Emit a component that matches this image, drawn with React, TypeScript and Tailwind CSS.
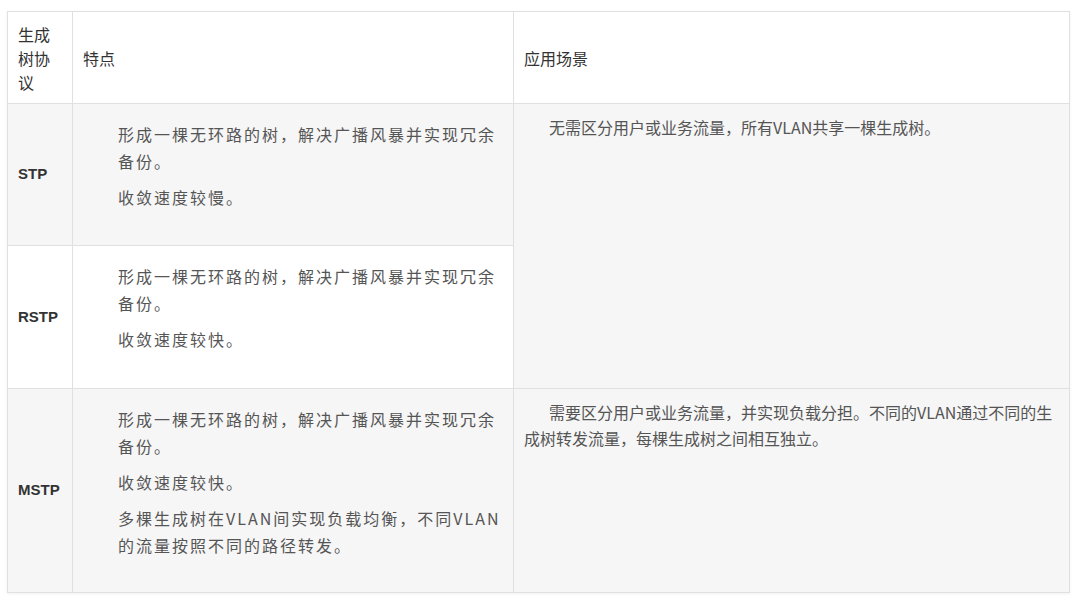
import React from 'react';

export default function App() {
    const redundancy = ["形成一棵无环路的树，解决广播风暴并实现冗余", "备份。"];

    const rows = [
        {
            name: "STP",
            bg: "bg-[#f6f6f6]",
            h: "h-[142px]",
            points: [redundancy, ["收敛速度较慢。"]],
        },
        {
            name: "RSTP",
            bg: "bg-white",
            h: "h-[143px]",
            points: [redundancy, ["收敛速度较快。"]],
        },
        {
            name: "MSTP",
            bg: "bg-[#f6f6f6]",
            h: "h-[204px]",
            points: [
                redundancy,
                ["收敛速度较快。"],
                ["多棵生成树在VLAN间实现负载均衡，不同VLAN", "的流量按照不同的路径转发。"],
            ],
        },
    ];

    const scenes: Record<string, { text: string; span: number } | null> = {
        STP: { text: "无需区分用户或业务流量，所有VLAN共享一棵生成树。", span: 2 },
        RSTP: null,
        MSTP: { text: "需要区分用户或业务流量，并实现负载分担。不同的VLAN通过不同的生成树转发流量，每棵生成树之间相互独立。", span: 1 },
    };

    return (
        <div className="min-h-screen bg-white pt-[11px] pl-[7px] font-['Noto_Sans_CJK_SC',sans-serif]">
            <table className="w-[1062px] table-fixed border-collapse border border-[#e0e0e0] shadow-[0_1px_3px_rgba(0,0,0,0.06)]">
                <colgroup>
                    <col className="w-[65px]" />
                    <col className="w-[441px]" />
                    <col className="w-[556px]" />
                </colgroup>
                <thead>
                    <tr className="h-[92px] bg-white text-[16px] leading-[24px] text-[#333]">
                        <th className="border border-[#e0e0e0] px-[10px] text-left align-middle font-normal">生成树协议</th>
                        <th className="border border-[#e0e0e0] px-[10px] text-left align-middle font-normal">特点</th>
                        <th className="border border-[#e0e0e0] px-[10px] text-left align-middle font-normal">应用场景</th>
                    </tr>
                </thead>
                <tbody>
                    {rows.map((row) => {
                        const scene = scenes[row.name];
                        return (
                            <tr key={row.name} className={`${row.h} ${row.bg}`}>
                                <td className="border border-[#e0e0e0] px-[10px] align-middle font-['Liberation_Sans',sans-serif] text-[15px] font-bold text-[#333]">
                                    {row.name}
                                </td>
                                <td className="border border-[#e0e0e0] px-[10px] pt-[17px] pb-[10px] align-top">
                                    <div className="flex flex-col gap-[9px] pl-[35px]">
                                        {row.points.map((lines, i) => (
                                            <p key={i} className="whitespace-nowrap text-[16px] leading-[27px] tracking-[2px] text-[#555]">
                                                {lines.map((line, j) => (
                                                    <span key={j} className="block">
                                                        {line}
                                                    </span>
                                                ))}
                                            </p>
                                        ))}
                                    </div>
                                </td>
                                {scene && (
                                    <td
                                        rowSpan={scene.span}
                                        className="border border-[#e0e0e0] bg-[#f6f6f6] px-[10px] pt-[10px] align-top"
                                    >
                                        <p className="indent-[25px] text-[16px] leading-[26px] text-[#555]">{scene.text}</p>
                                    </td>
                                )}
                            </tr>
                        );
                    })}
                </tbody>
            </table>
        </div>
    );
}
